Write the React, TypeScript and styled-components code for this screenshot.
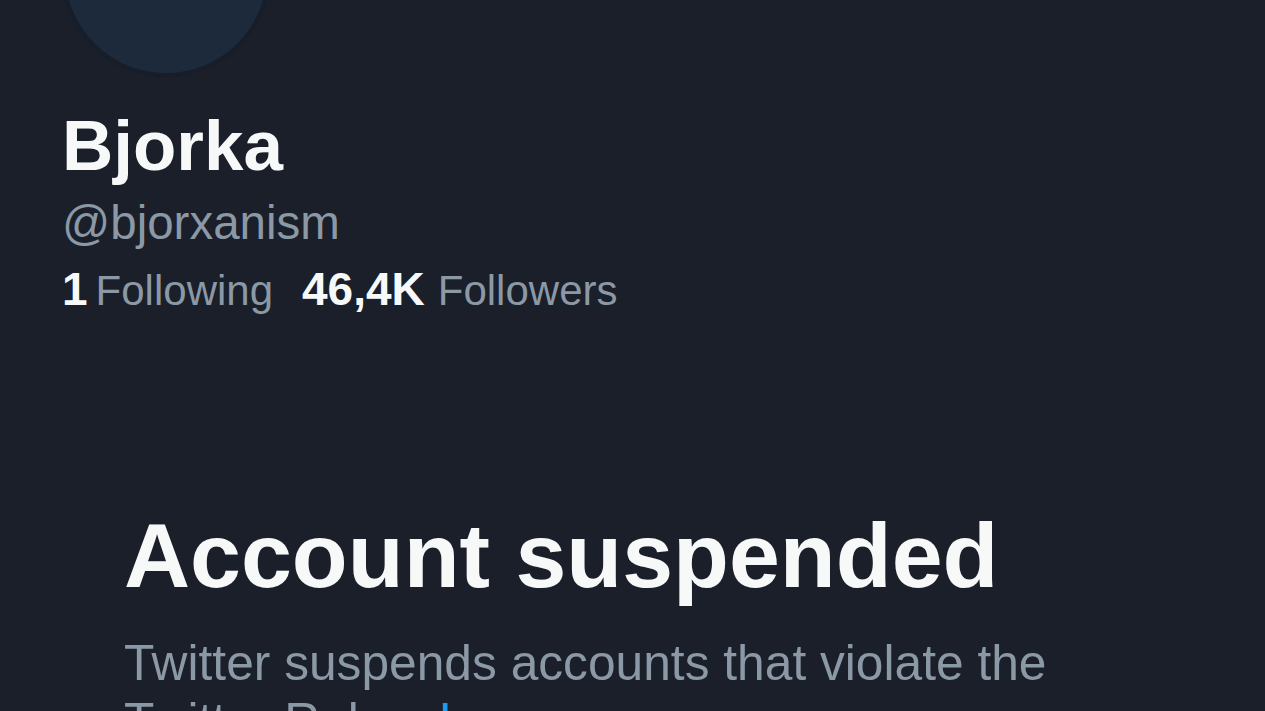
import React from "react";
import styled, { createGlobalStyle } from "styled-components";

const GlobalStyle = createGlobalStyle`
  html, body {
    margin: 0;
    padding: 0;
    background: #1a1f2a;
    overflow: hidden;
  }
  body {
    font-family: "Liberation Sans", Arial, sans-serif;
    -webkit-font-smoothing: antialiased;
  }
`;

const Page = styled.main`
  width: 1265px;
  height: 711px;
  background: #1a1f2a;
  overflow: hidden;
  display: flex;
  flex-direction: column;
`;

const Profile = styled.section`
  display: flex;
  flex-direction: column;
  align-items: flex-start;
  padding-left: 62px;
`;

const Avatar = styled.div`
  width: 202px;
  height: 202px;
  margin-top: -133px;
  margin-left: -1px;
  border-radius: 50%;
  background: #1c2a3b;
  border: 4px solid #171e29;
  margin-bottom: 29px;
`;

const Name = styled.h1`
  margin: 0;
  font-size: 71px;
  line-height: 80px;
  font-weight: 700;
  color: #f7f9f9;
`;

const Handle = styled.div`
  margin-top: 10px;
  font-size: 47.5px;
  line-height: 54px;
  color: #8b98a5;
`;

const Stats = styled.div`
  margin-top: 13px;
  display: flex;
  align-items: baseline;
  gap: 29px;
  font-size: 42px;
  line-height: 52px;
  color: #8b98a5;
`;

const Stat = styled.span`
  white-space: nowrap;
`;

const Count = styled.strong<{ $narrow?: boolean }>`
  display: inline-block;
  color: #f7f9f9;
  font-size: 46px;
  font-weight: 700;
  margin-right: ${(p) => (p.$narrow ? "8px" : "13px")};
`;

const Suspended = styled.section`
  display: flex;
  flex-direction: column;
  padding-left: 124px;
  margin-top: 188px;
`;

const Heading = styled.h2`
  margin: 0;
  font-size: 91.5px;
  line-height: 100px;
  font-weight: 700;
  color: #f7f9f9;
  white-space: nowrap;
`;

const Body = styled.p`
  margin: 29px 0 0;
  width: 980px;
  font-size: 49.7px;
  line-height: 58px;
  color: #8b98a5;
`;

const Link = styled.a`
  color: #1d9bf0;
  text-decoration: none;
`;

export default function App() {
  return (
    <>
      <GlobalStyle />
      <Page>
        <Profile>
          <Avatar />
          <Name>Bjorka</Name>
          <Handle>@bjorxanism</Handle>
          <Stats>
            <Stat>
              <Count $narrow>1</Count>Following
            </Stat>
            <Stat>
              <Count>46,4K</Count>Followers
            </Stat>
          </Stats>
        </Profile>
        <Suspended>
          <Heading>Account suspended</Heading>
          <Body>
            Twitter suspends accounts that violate the Twitter Rules.{" "}
            <Link href="#">Learn more</Link>
          </Body>
        </Suspended>
      </Page>
    </>
  );
}
